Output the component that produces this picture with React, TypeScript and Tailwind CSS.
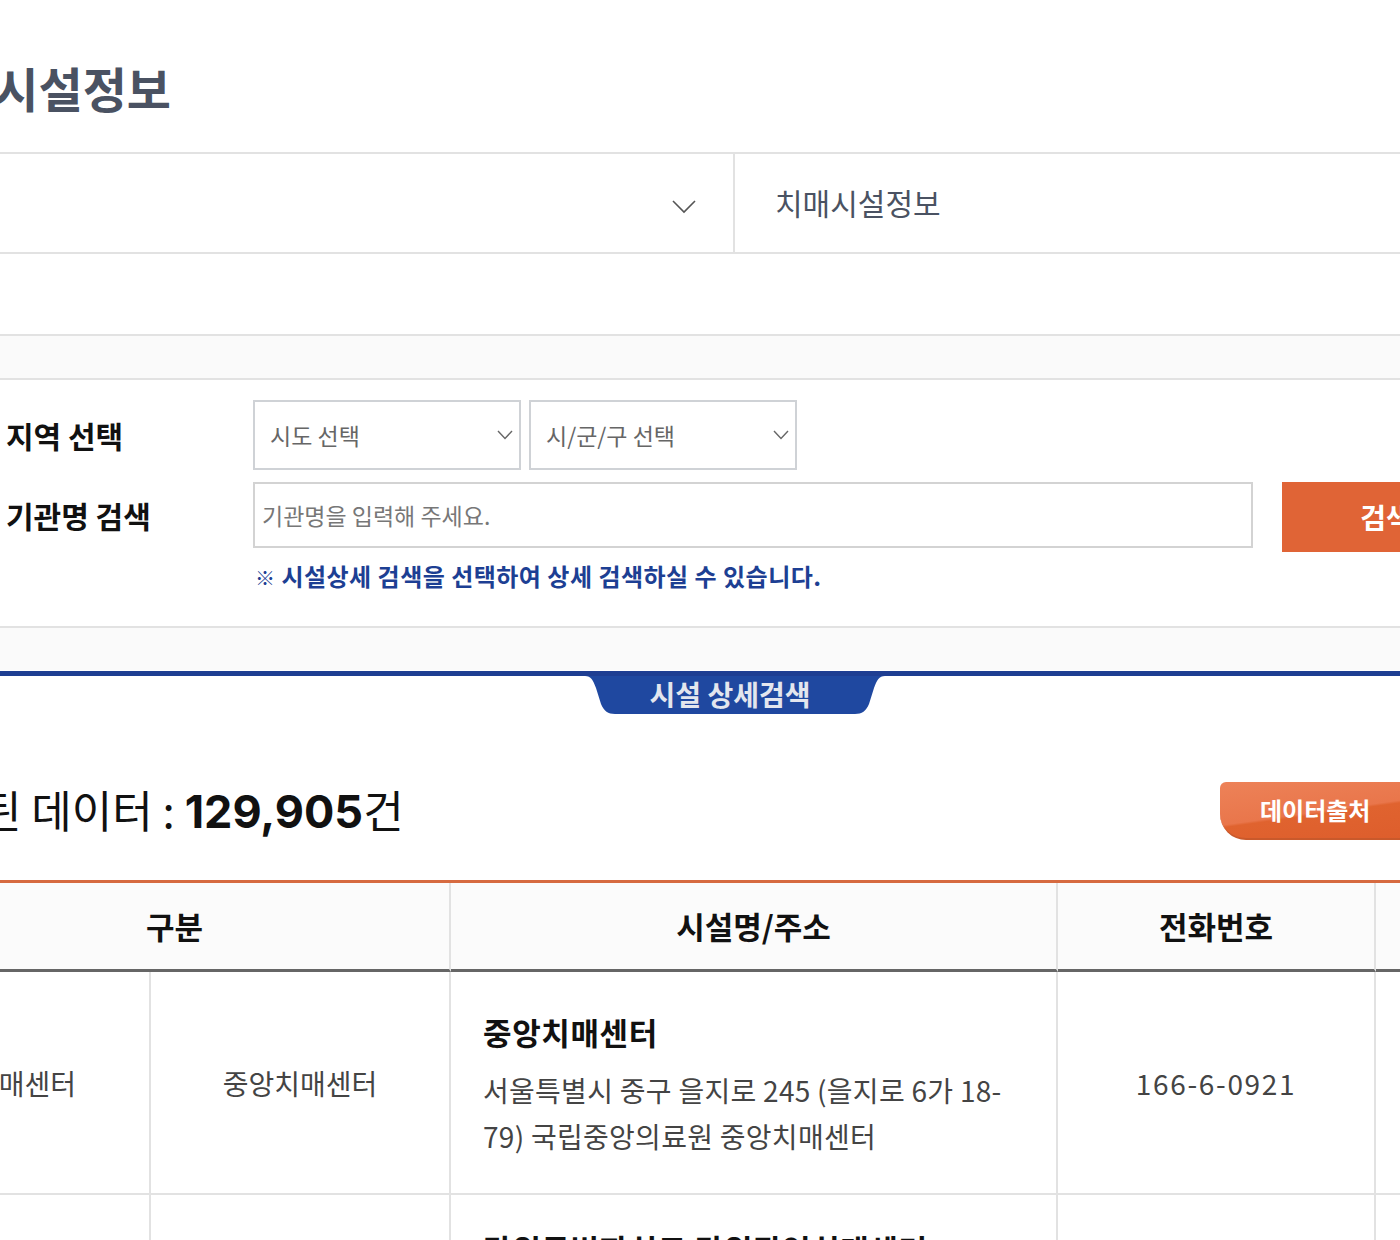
const font = { fontFamily: '"Noto Sans CJK KR", "Noto Sans", sans-serif' };

const rows = [
	{
		type: "치매센터",
		sub: "중앙치매센터",
		name: "중앙치매센터",
		address: "서울특별시 중구 을지로 245 (을지로 6가 18-\u200B79) 국립중앙의료원 중앙치매센터",
		phone: "166-6-0921",
		top: "pt-[40px]",
	},
	{
		type: "치매센터",
		sub: "광역치매센터",
		name: "강원특별자치도 강원광역치매센터",
		address: "강원특별자치도 춘천시 백령로 156 (효자동) 강원대학교병원",
		phone: "033-258-9988",
		top: "pt-[30px]",
	},
];

function BreadcrumbChevron() {
	return (
		<svg width="24" height="14" viewBox="0 0 24 14" fill="none">
			<path d="M1 1L12 12L23 1" stroke="#555" strokeWidth="1.6" />
		</svg>
	);
}

function SelectChevron() {
	return (
		<svg width="16" height="10" viewBox="0 0 16 10" fill="none">
			<path d="M1 1L8 8.5L15 1" stroke="#666" strokeWidth="1.4" />
		</svg>
	);
}

function DetailTab() {
	return (
		<div className="relative ml-[685px] h-[38px] w-[300px]">
			<svg className="absolute inset-0" width="300" height="38" viewBox="0 0 300 38">
				<path
					d="M0 0H300C294 0 292 4 289 12L284 28C281 35 277 38 270 38H30C23 38 19 35 16 28L11 12C8 4 6 0 0 0Z"
					fill="#1f48a0"
				/>
			</svg>
			<div className="relative flex h-full items-center justify-center pb-[3px] pr-[10px] text-[28px] font-bold text-[#e3e6ee]">
				시설 상세검색
			</div>
		</div>
	);
}

export default function App() {
	const cellLine = "border-r-2 border-b-2 border-[#e2e2e2]";
	const headLine = "border-r-2 border-b-[3px] border-r-[#e2e2e2] border-b-[#666]";

	return (
		<div className="h-[1240px] w-[1400px] overflow-hidden bg-white text-[#111]" style={font}>
			<div className="ml-[-100px] w-[1700px]">
				{/* Title */}
				<div className="flex h-[152px] items-center pl-[6px] pt-[22px]">
					<h1 className="text-[48px] font-bold leading-none text-[#4a5262]">치매시설정보</h1>
				</div>

				{/* Breadcrumb */}
				<div className="flex h-[102px] border-y-2 border-[#e2e2e2]">
					<div className="flex w-[835px] items-center justify-end border-r-2 border-[#e2e2e2] pr-[37px] pt-[8px]">
						<BreadcrumbChevron />
					</div>
					<div className="flex items-center pb-[2px] pl-[40px] text-[30px] text-[#4a5262]">치매시설정보</div>
				</div>
				<div className="h-[82px] border-b-2 border-[#e2e2e2]" />
				<div className="h-[42px] bg-[#fafafa]" />

				{/* Search box */}
				<div className="border-y-2 border-[#e2e2e2] pb-[32px] pl-[106px] pt-[20px]">
					<div className="flex items-center">
						<div className="w-[247px] text-[30px] font-bold">지역 선택</div>
						<div className="flex gap-[8px]">
							{["시도 선택", "시/군/구 선택"].map((label) => (
								<div
									key={label}
									className="flex h-[70px] w-[268px] items-center justify-between border-2 border-[#cfd2d6] pl-[15px] pr-[6px] text-[23px] text-[#666]"
								>
									<span>{label}</span>
									<SelectChevron />
								</div>
							))}
						</div>
					</div>
					<div className="mt-[12px] flex items-start">
						<div className="flex h-[66px] w-[247px] items-center text-[30px] font-bold">기관명 검색</div>
						<div>
							<div className="flex h-[66px] w-[1000px] items-center border-2 border-[#d3d3d3] pl-[7px] text-[23px] text-[#777]">
								기관명을 입력해 주세요.
							</div>
							<p className="mt-[10px] pl-[2px] text-[24px] font-bold tracking-[0.02em] text-[#1d3f93]">
								<span className="text-[20px]">※</span> 시설상세 검색을 선택하여 상세 검색하실 수 있습니다.
							</p>
						</div>
						<button className="ml-[29px] flex h-[70px] w-[212px] items-center justify-center bg-[#e06436] pr-[4px] text-[28px] font-bold text-white">
							검색
						</button>
					</div>
				</div>
				<div className="h-[42px] bg-[#fafafa]" />
				<div className="h-[6px] border-t border-white bg-[#1e3e92]" />
				<DetailTab />

				{/* Result count */}
				<div className="flex h-[166px] w-[1540px] items-center justify-between pt-[28px]">
					<div className="text-[44px]">
						검색된 데이터 :{" "}
						<b className="text-[45px] font-bold" style={{ fontFamily: "Inter, sans-serif" }}>
							129,905
						</b>
						건
					</div>
					<div className="flex h-[58px] w-[220px] items-center rounded-tl-[6px] rounded-bl-[26px] border-b-2 border-[#c9592b] bg-[linear-gradient(172deg,#ed8258_0%,#e9764b_50%,#e0632f_53%,#dd5d2c_100%)] pl-[40px] text-[24px] font-bold text-white">
						데이터출처
					</div>
				</div>

				{/* Table */}
				<table className="table-fixed border-separate border-spacing-0 border-t-[3px] border-[#d66a40]">
					<colgroup>
						<col className="w-[251px]" />
						<col className="w-[300px]" />
						<col className="w-[607px]" />
						<col className="w-[318px]" />
						<col className="w-[224px]" />
					</colgroup>
					<thead>
						<tr className="bg-[#fbfbfb] text-[31px] font-bold">
							<th colSpan={2} className={`h-[89px] ${headLine}`}>구분</th>
							<th className={headLine}>시설명/주소</th>
							<th className={headLine}>전화번호</th>
							<th className="border-b-[3px] border-b-[#666]" />
						</tr>
					</thead>
					<tbody className="text-[28px] text-[#444]">
						{rows.map((row) => (
							<tr key={row.name}>
								<td className={`h-[221px] text-center ${cellLine}`}>{row.type}</td>
								<td className={`text-center ${cellLine}`}>{row.sub}</td>
								<td className={`px-[32px] pb-[34px] ${row.top} ${cellLine}`}>
									<div className="text-[31px] font-bold leading-[40px] tracking-[0.02em] text-[#111]">{row.name}</div>
									<div className="mt-[15px] leading-[46px] tracking-[0.01em]">{row.address}</div>
								</td>
								<td className={`text-center tracking-[0.06em] ${cellLine}`}>{row.phone}</td>
								<td className="border-b-2 border-[#e2e2e2]" />
							</tr>
						))}
					</tbody>
				</table>
			</div>
		</div>
	);
}
